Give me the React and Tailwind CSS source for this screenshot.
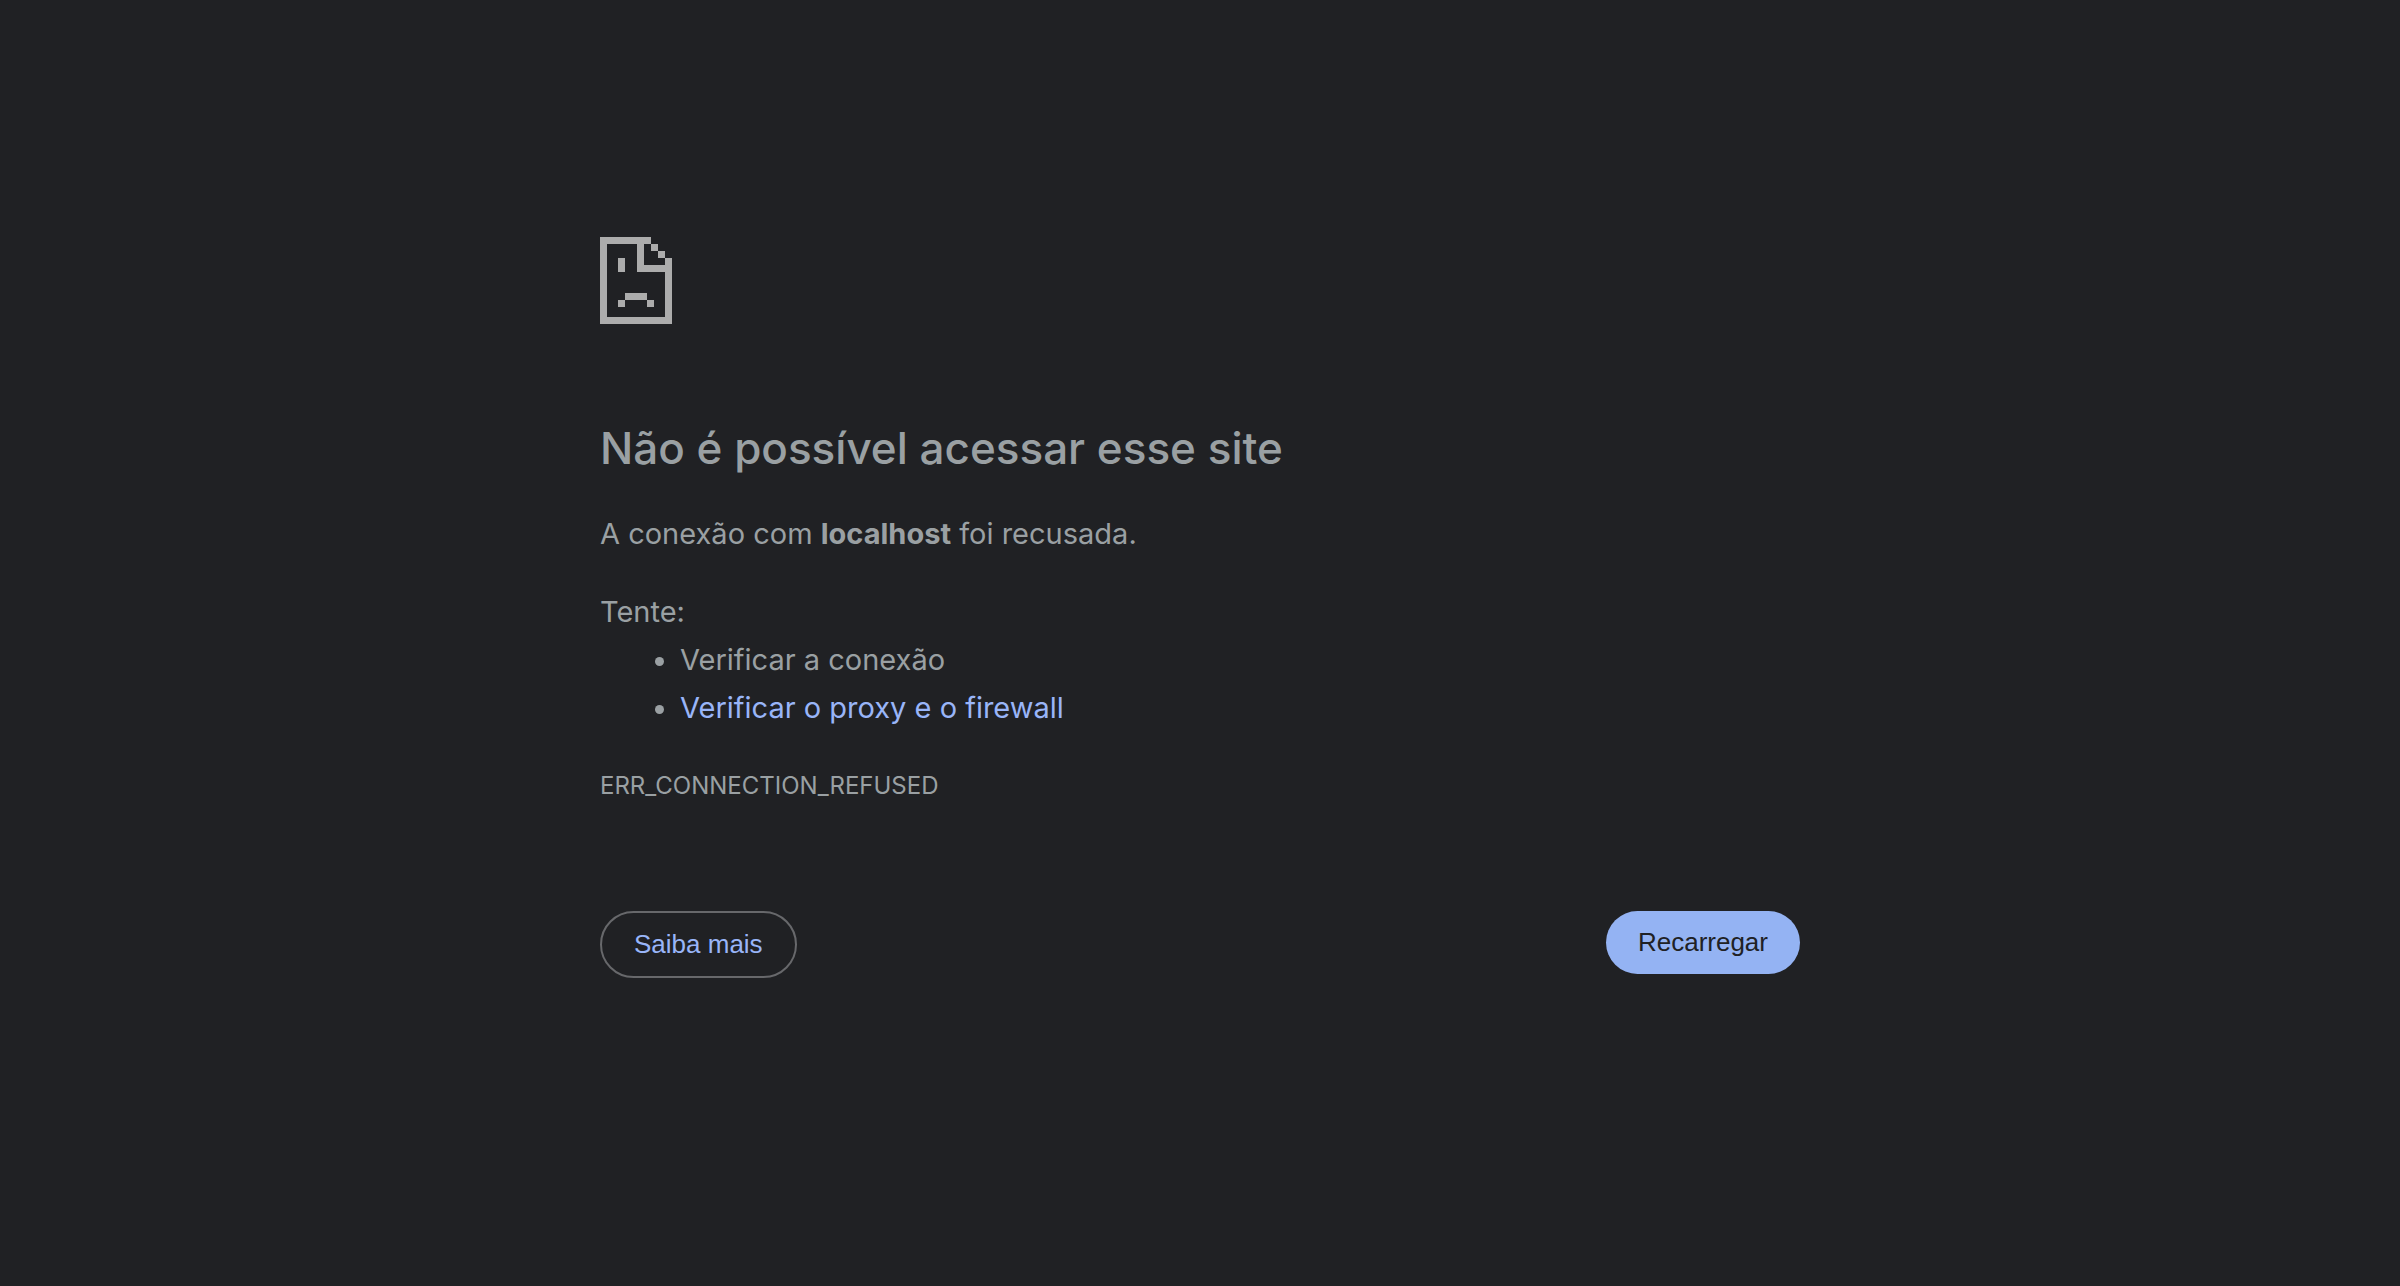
export default function App() {
  return (
    <main className="min-h-screen bg-[#202124] pt-[237px] font-['Inter',sans-serif] text-[29px] leading-[48px] text-[#9aa0a3]">
      <div className="mx-auto w-full max-w-[1200px]">
        <svg className="h-[87px] w-[72px]" viewBox="0 0 72 87" fill="#acacac" shapeRendering="crispEdges" aria-hidden="true">
          <path d="M0 0h51v7H44v21h21V21h7v66H0zM7 7v73h58V35H37V7z" fillRule="evenodd" />
          <path d="M51 7h7v7h-7zM58 14h7v7h-7zM18 21h7v14h-7zM25 56h22v7H25zM18 63h7v7h-7zM47 63h7v7h-7z" />
        </svg>
        <h1 className="mt-[94px] text-[44px] leading-[60px] font-medium">Não é possível acessar esse site</h1>
        <p className="mt-8">A conexão com <strong className="font-bold">localhost</strong> foi recusada.</p>
        <p className="mt-[30px]">Tente:</p>
        <ul className="list-disc pl-20">
          <li>Verificar a conexão</li>
          <li><a href="#proxy" className="text-[#99b5f8]">Verificar o proxy e o firewall</a></li>
        </ul>
        <p className="mt-[30px] text-2xl leading-[48px]">ERR_CONNECTION_REFUSED</p>
        <div className="mt-[101px] flex items-start justify-between font-['Liberation_Sans',sans-serif] text-[26px] leading-[31px]">
          <button type="button" className="rounded-full border-2 border-[#67686b] px-8 py-4 text-[#99b5f8]">Saiba mais</button>
          <button type="button" className="rounded-full bg-[#94b3f3] px-8 py-4 text-[#202124]">Recarregar</button>
        </div>
      </div>
    </main>
  );
}
